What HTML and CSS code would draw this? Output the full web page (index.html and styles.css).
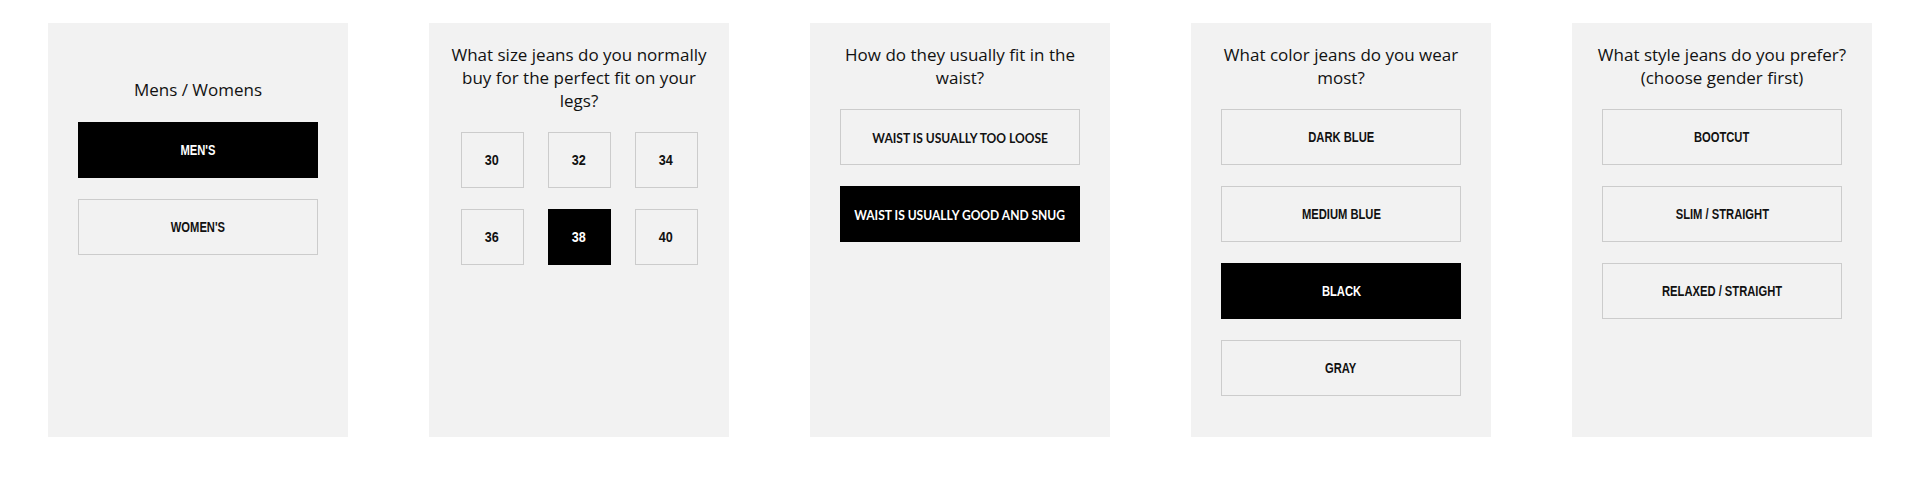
FILE: index.html
```html
<!DOCTYPE html>
<html lang="en">
<head>
<meta charset="utf-8">
<title>Jeans fit quiz</title>
<link rel="stylesheet" href="styles.css">
</head>
<body>
<main class="quiz">
  <section class="card">
    <h2 class="question question--single">Mens / Womens</h2>
    <div class="options">
      <button class="option is-selected"><span class="label">MEN'S</span></button>
      <button class="option"><span class="label">WOMEN'S</span></button>
    </div>
  </section>

  <section class="card">
    <h2 class="question">What size jeans do you normally buy for the perfect fit on your legs?</h2>
    <div class="sizes">
      <button class="option size"><span class="label">30</span></button>
      <button class="option size"><span class="label">32</span></button>
      <button class="option size"><span class="label">34</span></button>
      <button class="option size"><span class="label">36</span></button>
      <button class="option size is-selected"><span class="label">38</span></button>
      <button class="option size"><span class="label">40</span></button>
    </div>
  </section>

  <section class="card">
    <h2 class="question">How do they usually fit in the waist?</h2>
    <div class="options">
      <button class="option option--alt"><span class="label">WAIST IS USUALLY TOO LOOSE</span></button>
      <button class="option option--alt is-selected"><span class="label">WAIST IS USUALLY GOOD AND SNUG</span></button>
    </div>
  </section>

  <section class="card">
    <h2 class="question">What color jeans do you wear most?</h2>
    <div class="options">
      <button class="option"><span class="label">DARK BLUE</span></button>
      <button class="option"><span class="label">MEDIUM BLUE</span></button>
      <button class="option is-selected"><span class="label">BLACK</span></button>
      <button class="option"><span class="label">GRAY</span></button>
    </div>
  </section>

  <section class="card">
    <h2 class="question">What style jeans do you prefer? (choose gender first)</h2>
    <div class="options">
      <button class="option"><span class="label">BOOTCUT</span></button>
      <button class="option"><span class="label">SLIM / STRAIGHT</span></button>
      <button class="option"><span class="label">RELAXED / STRAIGHT</span></button>
    </div>
  </section>
</main>
</body>
</html>
```

FILE: styles.css
```css
html, body {
  margin: 0;
  padding: 0;
  background: #ffffff;
}

.quiz {
  display: flex;
  justify-content: space-between;
  padding: 23px 48px 0;
}

.card {
  box-sizing: border-box;
  width: 300px;
  height: 414px;
  background: #f2f2f2;
  padding: 20px 15px 0;
}

.question {
  margin: 0 0 20px;
  font-family: "Open Sans", "Liberation Sans", sans-serif;
  font-weight: 400;
  font-size: 17px;
  line-height: 23px;
  color: #111111;
  text-align: center;
}

.question--single {
  padding-top: 35px;
  margin-bottom: 21px;
}

.options {
  display: flex;
  flex-direction: column;
  align-items: center;
  gap: 21px;
}

.option {
  box-sizing: border-box;
  display: flex;
  align-items: center;
  justify-content: center;
  width: 240px;
  height: 56px;
  margin: 0;
  padding: 0;
  background: transparent;
  border: 1px solid #cccccc;
  border-radius: 0;
  font-family: "Liberation Sans", Arial, sans-serif;
  font-weight: 700;
  font-size: 14px;
  color: #111111;
  cursor: pointer;
}

.label {
  display: inline-block;
  white-space: nowrap;
  transform: scaleX(0.8);
}

.option--alt {
  font-family: Lato, "Liberation Sans", sans-serif;
  font-size: 14px;
}

.option--alt .label {
  transform: scaleX(0.86);
}

.option.is-selected {
  background: #000000;
  border-color: #000000;
  color: #ffffff;
}

.sizes {
  display: grid;
  grid-template-columns: repeat(3, 63px);
  column-gap: 24px;
  row-gap: 21px;
  justify-content: center;
}

.option.size {
  width: 63px;
}

.option.size .label {
  transform: scaleX(0.9);
}
```
